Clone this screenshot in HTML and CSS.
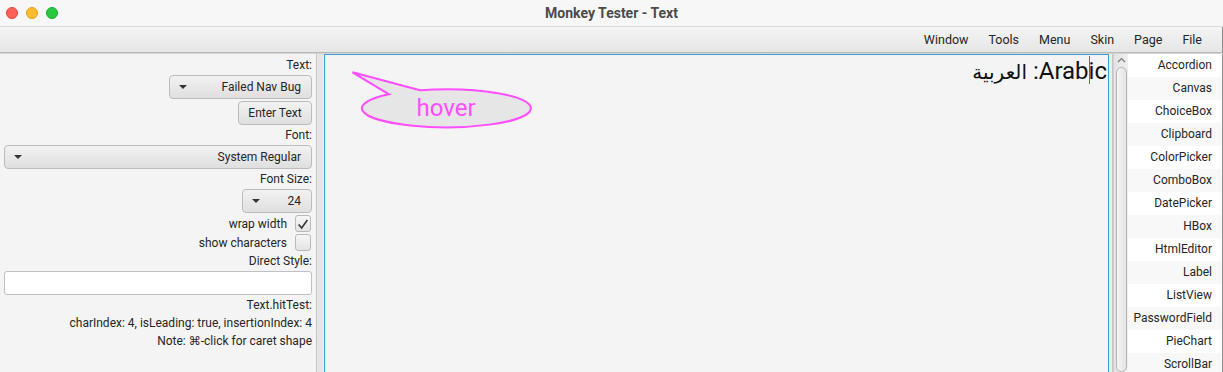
FILE: index.html
```html
<!DOCTYPE html>
<html lang="en">
<head>
  <meta charset="UTF-8" />
  <title>Monkey Tester - Text</title>
  <link rel="stylesheet" href="styles.css">
</head>
<body>

  <!-- window title -->
  <div class="titlebar">
    <div class="lights">
      <span class="light red"></span>
      <span class="light yellow"></span>
      <span class="light green"></span>
    </div>
    <div class="title">Monkey Tester - Text</div>
    <div></div>
  </div>

  <div class="menubar">
    <span class="menu">Window</span>
    <span class="menu">Tools</span>
    <span class="menu">Menu</span>
    <span class="menu">Skin</span>
    <span class="menu">Page</span>
    <span class="menu">File</span>
  </div>

  <div class="main">

    <!-- left: options -->
    <div class="options">
      <div class="label">Text:</div>
      <div class="combo nav-combo"><span class="arrow"></span><span>Failed Nav Bug</span></div>
      <div class="button">Enter Text</div>
      <div class="label">Font:</div>
      <div class="combo wide"><span class="arrow"></span><span>System Regular</span></div>
      <div class="label">Font Size:</div>
      <div class="combo size-combo"><span class="arrow"></span><span>24</span></div>
      <div class="check-row">
        <span>wrap width</span>
        <span class="checkbox">
          <svg width="16" height="16" viewBox="0 0 16 16"><path d="M3 8.5 L6.5 12.5 L13 3.5" fill="none" stroke="#333" stroke-width="1.8"/></svg>
        </span>
      </div>
      <div class="check-row">
        <span>show characters</span>
        <span class="checkbox"></span>
      </div>
      <div class="label">Direct Style:</div>
      <div class="field"></div>
      <div class="label">Text.hitTest:</div>
      <div class="label">charIndex: 4, isLeading: true, insertionIndex: 4</div>
      <div class="label">Note: ⌘-click for caret shape</div>
    </div>

    <div class="divider"></div>

    <!-- center: the text under test -->
    <div class="stage">
      <div class="sample" dir="rtl">Arab<span class="caret"></span>ic: <span class="ar">العربية</span></div>
      <svg class="bubble" width="240" height="90" viewBox="0 0 240 90">
        <path d="M95 35.2 L27.5 17.3 L64 39.3 A84.5 19 0 1 0 95 35.2 Z" fill="#e6e6e6" stroke="#ff4dff" stroke-width="2"/>
        <text x="121" y="61" text-anchor="middle" class="bubble-text">hover</text>
      </svg>
    </div>

    <div class="divider thin"></div>

    <!-- right: page list -->
    <div class="scrollbar">
      <div class="up">
        <svg width="9" height="6" viewBox="0 0 9 6"><path d="M1 5 L4.5 1.5 L8 5" fill="none" stroke="#777" stroke-width="1.2"/></svg>
      </div>
      <div class="thumb"></div>
    </div>
    <ul class="pages">
      <li>Accordion</li>
      <li>Canvas</li>
      <li>ChoiceBox</li>
      <li>Clipboard</li>
      <li>ColorPicker</li>
      <li>ComboBox</li>
      <li>DatePicker</li>
      <li>HBox</li>
      <li>HtmlEditor</li>
      <li>Label</li>
      <li>ListView</li>
      <li>PasswordField</li>
      <li>PieChart</li>
      <li>ScrollBar</li>
    </ul>
    <div class="edge"></div>

  </div>

</body>
</html>
```

FILE: styles.css
```css
body {
  margin: 0;
  width: 1223px;
  height: 372px;
  overflow: hidden;
  font-family: Roboto, "DejaVu Sans", sans-serif;
  font-size: 12px;
  color: #262626;
  background-color: #f4f4f4;
}

/* title bar */
.titlebar {
  height: 26px;
  display: grid;
  grid-template-columns: 1fr auto 1fr;
  align-items: center;
  background: #f7f7f7;
  border-bottom: 1px solid #dadada;
}

.lights {
  display: flex;
  gap: 8px;
  padding-left: 6px;
}

.light {
  width: 12px;
  height: 12px;
  border-radius: 50%;
  box-sizing: border-box;
}

.red { background: #fe5f57; border: 1px solid #e2463f; }
.yellow { background: #febc2e; border: 1px solid #e1a116; }
.green { background: #28c840; border: 1px solid #14ae2a; }

.title {
  font-size: 14px;
  font-weight: bold;
  color: #4b4b4b;
}

/* menu bar */
.menubar {
  height: 25px;
  display: flex;
  justify-content: flex-end;
  align-items: center;
  padding-right: 10px;
  font-size: 12.5px;
  background: linear-gradient(#f4f4f4, #e6e6e6);
  border-bottom: 1px solid #b8b8b8;
  border-right: 1px solid #8c8c8c;
}

.menu {
  padding: 0 10px;
}

.main {
  display: flex;
  height: 318px;
  overflow: hidden;
  border-top: 1px solid #d6d6d6;
}

/* left options */
.options {
  width: 316px;
  flex: none;
  box-sizing: border-box;
  padding: 3px 4px 0 4px;
  display: flex;
  flex-direction: column;
  align-items: flex-end;
  gap: 2px;
}

.label {
  height: 16px;
  line-height: 16px;
  white-space: nowrap;
}

.combo,
.button {
  height: 24px;
  box-sizing: border-box;
  border: 1px solid #bcbcbc;
  border-radius: 4px;
  background: linear-gradient(#f2f2f2, #dfdfdf);
  display: flex;
  align-items: center;
}

.combo {
  justify-content: space-between;
  padding: 0 10px 0 9px;
}

.nav-combo { width: 143px; }
.size-combo { width: 70px; }
.wide { align-self: stretch; }

.button {
  width: 74px;
  justify-content: center;
}

.arrow {
  width: 0;
  height: 0;
  border-left: 4px solid transparent;
  border-right: 4px solid transparent;
  border-top: 4px solid #333;
}

.check-row {
  height: 17px;
  display: flex;
  align-items: center;
  gap: 8px;
  margin-right: 1px;
}

.checkbox {
  width: 16px;
  height: 17px;
  box-sizing: border-box;
  border: 1px solid #b9b9b9;
  border-radius: 3px;
  background: linear-gradient(#f7f7f7, #e3e3e3);
  display: flex;
  align-items: center;
  justify-content: center;
}

.field {
  align-self: stretch;
  height: 24px;
  box-sizing: border-box;
  background: #fff;
  border: 1px solid #c0c0c0;
  border-radius: 3px;
}

.divider {
  width: 8px;
  flex: none;
  box-sizing: border-box;
  background: #e5e5e5;
  border-left: 1px solid #c6c6c6;
  border-right: 1px solid #f0f0f0;
}

.divider.thin {
  width: 4px;
  background: #ededed;
  border-left: none;
  border-right: 1px solid #c4c4c4;
}

/* center */
.stage {
  width: 785px;
  flex: none;
  box-sizing: border-box;
  position: relative;
  border: 1px solid #3a9dd4;
  border-bottom: none;
  padding: 1px 1px 0 0;
}

.sample {
  font-size: 24px;
  line-height: 30px;
  color: #111;
  white-space: nowrap;
}

.caret {
  display: inline-block;
  width: 1px;
  height: 28px;
  margin-right: -1px;
  background: #ee3b3b;
  vertical-align: top;
}

.ar {
  font-family: "DejaVu Sans", sans-serif;
  font-size: 20px;
}

.bubble {
  position: absolute;
  left: 0;
  top: 0;
}

.bubble-text {
  font-family: Roboto, sans-serif;
  font-size: 24px;
  fill: #ff4dff;
}

/* right list */
.scrollbar {
  width: 15px;
  flex: none;
  box-sizing: border-box;
  background: linear-gradient(to right, #e3e3e3, #efefef);
  border-left: 1px solid #d2d2d2;
  display: flex;
  flex-direction: column;
}

.up {
  height: 12px;
  display: flex;
  align-items: center;
  justify-content: center;
}

.thumb {
  flex: 1;
  margin: 1px 1px 0 2px;
  border: 1px solid #b4b4b4;
  border-radius: 6px;
  background: linear-gradient(to right, #f6f6f6, #e4e4e4);
}

.pages {
  width: 93px;
  flex: none;
  margin: 0;
  padding: 0;
  list-style: none;
  background: #fff;
  overflow: hidden;
}

.pages li {
  height: 23px;
  line-height: 23px;
  text-align: right;
  padding-right: 9px;
  white-space: nowrap;
  overflow: hidden;
}

.pages li:nth-child(even) {
  background: #f8f8f8;
}

.edge {
  width: 2px;
  flex: none;
  box-sizing: border-box;
  border-left: 1px solid #fbfbfb;
  background: #8c8c8c;
}
```
